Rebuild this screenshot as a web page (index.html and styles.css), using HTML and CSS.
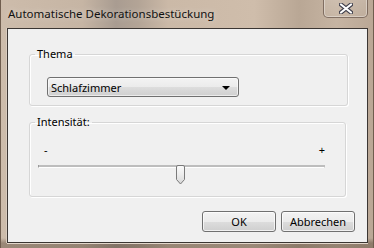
FILE: index.html
```html
<!DOCTYPE html>
<html lang="de">
<head>
    <meta charset="UTF-8">
    <title>Automatische Dekorationsbestückung</title>
<link rel="stylesheet" href="styles.css">
</head>
<body>
    <div class="window">
        <div class="titlebar">
            <span class="title">Automatische Dekorationsbestückung</span>
            <div class="close">
                <svg width="14" height="11" viewBox="0 0 14 11">
                    <path d="M2 1.5 L12 9.5 M12 1.5 L2 9.5" stroke="#3d3d4a" stroke-width="4.2" stroke-linecap="round"/>
                    <path d="M2 1.5 L12 9.5 M12 1.5 L2 9.5" stroke="#ffffff" stroke-width="2.2" stroke-linecap="round"/>
                </svg>
            </div>
        </div>
        <div class="client">
            <fieldset class="group theme">
                <legend>Thema</legend>
                <div class="combo">
                    <span>Schlafzimmer</span>
                    <span class="arrow"></span>
                </div>
            </fieldset>
            <fieldset class="group intensity">
                <legend>Intensität:</legend>
                <div class="scale"><span>-</span><span>+</span></div>
                <div class="slider">
                    <div class="track"></div>
                    <svg class="thumb" width="11" height="20" viewBox="0 0 11 20">
                        <defs>
                            <linearGradient id="tg" x1="0" y1="0" x2="0" y2="1">
                                <stop offset="0" stop-color="#fbfbfb"/>
                                <stop offset="0.5" stop-color="#ececec"/>
                                <stop offset="1" stop-color="#d6d6d6"/>
                            </linearGradient>
                        </defs>
                        <path d="M1.5 2 Q1.5 0.5 3 0.5 L8 0.5 Q9.5 0.5 9.5 2 L9.5 14.5 L5.5 19 L1.5 14.5 Z" fill="url(#tg)" stroke="#7a7a7a"/>
                    </svg>
                </div>
            </fieldset>
            <div class="actions">
                <button class="btn ok">OK</button>
                <button class="btn">Abbrechen</button>
            </div>
        </div>
    </div>
</body>
</html>
```

FILE: styles.css
```css
body{
    margin: 0;
    width: 374px;
    height: 248px;
    overflow: hidden;
    font-family: "Noto Sans", "Open Sans", sans-serif;
    font-size: 11px;
    color: #000;
    background: linear-gradient(180deg, rgba(0,0,0,0) 0%, rgba(0,0,0,0) 96%, rgba(60,40,25,0.35) 98%, rgba(60,40,25,0.35) 100%),
        linear-gradient(90deg, #cdbcab 0%, #c6b5a4 22%, #a99c91 31%, #b3a496 37%, #cbb9a7 45%, #cfbdab 68%, #b9a795 80%, #c6b4a2 90%, #baa795 100%);
}
.window{
    height: 248px;
    display: flex;
    flex-direction: column;
    box-shadow: inset 1px 0 0 #6f5d4e, inset -1px 0 0 #6f5d4e;
}
.titlebar{
    height: 28px;
    display: flex;
    align-items: flex-start;
}
.title{
    padding: 7px 0 0 8px;
    line-height: 14px;
    font-size: 11.5px;
    color: #111;
    text-shadow: 0 0 6px rgba(255,255,255,0.5);
}
.close{
    margin-left: auto;
    margin-right: 6px;
    margin-top: -1px;
    width: 45px;
    height: 19px;
    box-sizing: border-box;
    border: 1px solid rgba(70,50,40,0.55);
    border-top: none;
    border-radius: 0 0 5px 5px;
    background: linear-gradient(180deg, rgba(255,255,255,0.15), rgba(255,255,255,0.05));
    box-shadow: inset 0 0 0 1px rgba(255,255,255,0.35);
    display: flex;
    align-items: center;
    justify-content: center;
}
.client{
    margin: 0 6px 0 7px;
    height: 213px;
    border: 1px solid #3b3633;
    background: #f0f0f0;
    box-shadow: 0 1px 0 #e2d6ca, -1px 0 0 #d9ccbf;
}
.group{
    margin: 18px 19px 0 21px;
    padding: 0;
    border: 1px solid #d6d6d6;
    border-radius: 3px;
    box-shadow: 1px 1px 0 #fff, inset 1px 1px 0 #fff;
    min-width: 0;
}
.group legend{
    margin-left: 5px;
    padding: 0 2px;
    line-height: 14px;
}
.intensity{
    margin-top: 9px;
    margin-right: 21px;
}
.combo{
    margin: 16px 0 8px 17px;
    width: 192px;
    height: 20px;
    box-sizing: border-box;
    border: 1px solid #707070;
    border-radius: 3px;
    background: linear-gradient(180deg, #f3f3f3 0%, #ebebeb 50%, #dddddd 51%, #cfcfcf 100%);
    box-shadow: inset 0 0 0 1px rgba(255,255,255,0.6);
    display: flex;
    align-items: center;
    justify-content: space-between;
    padding: 0 8px 0 3px;
}
.arrow{
    width: 0;
    height: 0;
    border-left: 4px solid transparent;
    border-right: 4px solid transparent;
    border-top: 4px solid #000;
    margin-top: 1px;
}
.scale{
    display: flex;
    justify-content: space-between;
    padding: 14px 20px 0 14px;
    line-height: 14px;
}
.slider{
    position: relative;
    height: 20px;
    margin: 3px 0 11px 0;
}
.track{
    margin: 8px 20px 0 8px;
    height: 3px;
    box-sizing: border-box;
    background: #bdbdbd;
    border-bottom: 1px solid #fff;
    border-left: 1px solid #9a9a9a;
    border-right: 1px solid #bdbdbd;
}
.thumb{
    position: absolute;
    left: 145px;
    top: 0;
}
.actions{
    display: flex;
    justify-content: flex-end;
    gap: 5px;
    margin-top: 14px;
    padding-right: 12px;
}
.btn{
    width: 74px;
    height: 21px;
    box-sizing: border-box;
    border: 1px solid #707070;
    border-radius: 3px;
    background: linear-gradient(180deg, #f3f3f3 0%, #ebebeb 50%, #dddddd 51%, #cfcfcf 100%);
    box-shadow: inset 0 0 0 1px rgba(255,255,255,0.7);
    font-family: inherit;
    font-size: 11px;
    color: #000;
    padding: 0;
    line-height: 18px;
}
```
